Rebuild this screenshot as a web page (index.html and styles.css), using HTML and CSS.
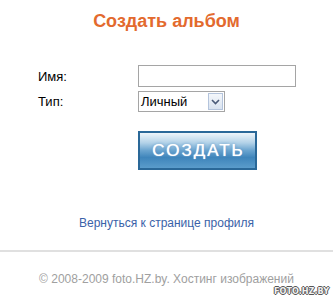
FILE: index.html
```html
<!DOCTYPE html>
<html lang="ru">
<head>
    <meta charset="UTF-8">
    <meta name="viewport" content="width=device-width, initial-scale=1.0">
    <title>Создать альбом</title>
    <link rel="stylesheet" href="styles.css">
</head>
<body>
    <div class="page">
        <h1>Создать альбом</h1>
        <form class="album-form">
            <label for="name">Имя:</label>
            <input type="text" id="name" name="name">

            <label for="type">Тип:</label>
            <div class="select-box">
                <span class="select-value">Личный</span>
                <span class="select-arrow">
                    <svg width="9" height="6" viewBox="0 0 9 6"><path d="M1 1 L4.5 4.5 L8 1" fill="none" stroke="#4a5a78" stroke-width="1.6"/></svg>
                </span>
            </div>

            <span></span>
            <button type="submit" class="create-btn">СОЗДАТЬ</button>
        </form>

        <div class="back">
            <a href="#">Вернуться к странице профиля</a>
        </div>

        <div class="footer">© 2008-2009 foto.HZ.by. Хостинг изображений</div>
    </div>
    <div class="watermark">FOTO.HZ.BY</div>
</body>
</html>
```

FILE: styles.css
```css
body {
    font-family: Arial, "Liberation Sans", sans-serif;
    margin: 0;
    padding: 0;
    background-color: #fff;
    color: #000;
}
.page {
    padding-top: 10px;
}
.page h1 {
    margin: 0;
    font-size: 18px;
    line-height: 22px;
    text-align: center;
    color: #e36a2e;
}
.album-form {
    display: grid;
    grid-template-columns: 100px 158px;
    row-gap: 4px;
    margin: 33px 0 0 38px;
    font-size: 13px;
}
.album-form label {
    align-self: center;
}
.album-form input {
    box-sizing: border-box;
    width: 158px;
    height: 22px;
    margin: 0;
    border: 1px solid #a5a5a5;
}
.select-box {
    box-sizing: border-box;
    width: 87px;
    height: 21px;
    border: 1px solid #a5a5a5;
    display: flex;
    align-items: center;
    justify-content: space-between;
    padding-left: 2px;
}
.select-arrow {
    width: 15px;
    height: 17px;
    margin-right: 1px;
    border: 1px solid #b4c4dc;
    background: linear-gradient(#f4f7fb, #d9e3f0);
    box-sizing: border-box;
    display: flex;
    align-items: center;
    justify-content: center;
}
.create-btn {
    grid-column: 2;
    margin-top: 15px;
    width: 119px;
    height: 39px;
    border: 2px solid #2a6898;
    background: linear-gradient(#eef5fa 0%, #b3d2e8 28%, #6aa4cf 50%, #3f85bb 70%, #5a9ccb 100%);
    color: #fff;
    font-family: Arial, "Liberation Sans", sans-serif;
    font-size: 17px;
    letter-spacing: 2px;
    text-shadow: 0 0 1px #fff, 0 0 3px #4d8cc0;
    padding: 0 0 0 2px;
    cursor: pointer;
}
.back {
    text-align: center;
    margin-top: 46px;
    font-size: 12px;
}
.back a {
    color: #3a62a8;
    text-decoration: none;
}
.footer {
    margin-top: 20px;
    border-top: 2px solid #e0e0e0;
    padding-top: 20px;
    text-align: center;
    font-size: 12px;
    color: #a0a0a0;
}
.watermark {
    position: absolute;
    right: 4px;
    bottom: 2px;
    font-family: "DejaVu Sans Condensed", "DejaVu Sans", sans-serif;
    font-size: 9px;
    font-weight: bold;
    color: #f0f0f0;
    text-shadow: -1px 0 #555, 1px 0 #555, 0 -1px #555, 0 1px #555;
}
```
